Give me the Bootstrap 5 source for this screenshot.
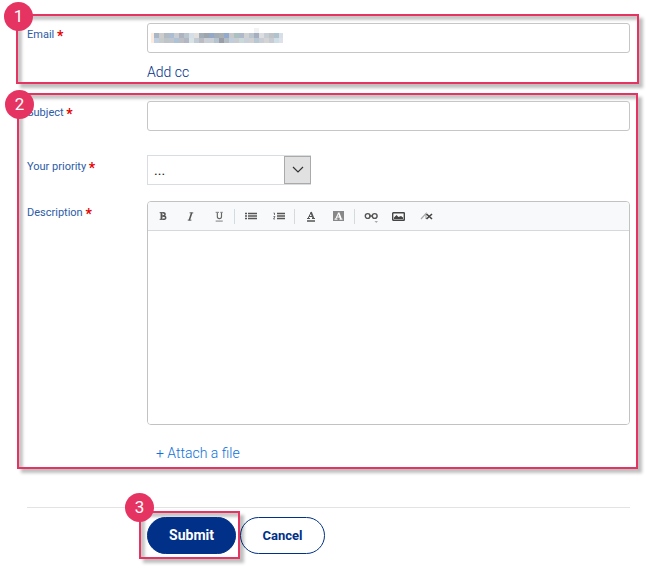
<!DOCTYPE html>
<html lang="en">
<head>
<meta charset="utf-8">
<meta name="viewport" content="width=device-width, initial-scale=1">
<title>Submit a request</title>
<link href="https://cdn.jsdelivr.net/npm/bootstrap@5.3.0/dist/css/bootstrap.min.css" rel="stylesheet">
<style>
body{font-family:Roboto,"Liberation Sans",sans-serif;font-size:14px;line-height:20px;color:#003087;background:#fff}
.page-form{padding:14px 23px 16px 16px}
.callout{position:relative;border:2px solid #e63462;box-shadow:4px 4px 3px rgba(0,0,0,.25),inset 4px 4px 3px rgba(0,0,0,.22)}
.callout-user{padding:7px 7px 0 9px}
.callout-details{margin:9px 1px 0 1px;padding:6px 6px 4px 8px}
.step{position:absolute;width:29px;height:29px;border-radius:50%;background:#e63462;color:#fff;font-size:17px;line-height:29px;text-align:center;left:-14px;top:-14px}
.callout-details .step{top:-5px}
.callout-submit .step{left:-16px;top:-20px}
.label-col{width:120px;flex:none;padding-top:5px;font-size:11px;line-height:14px;color:#2c5ba8}
.req{color:#e60000;font-size:14px;line-height:14px;font-weight:700;vertical-align:-3px}
.field,.field:focus{height:30px;min-height:30px;border:1px solid #c6c6c6;border-radius:3px;box-shadow:none;font-size:14px;padding:4px 6px}
.thin{font-weight:300;text-decoration:none}
.cc-row{padding-top:9px}
.cc{color:#003087}
.attach{color:#1070d8}
.attach-row{padding:18px 9px 0}
.mosaic{position:absolute;left:2px;top:5px;pointer-events:none}
.priority{width:164px;position:relative}
.priority select{display:block;appearance:none;width:100%;height:30px;border:1px solid #d8dde2;border-radius:0;background:#fff;padding:0 6px;font-size:14px;color:#222}
.arrow{position:absolute;right:0;top:1px;width:27px;height:28px;border:1px solid #aaa;background:#e1e1e1;pointer-events:none}
.editor{border:1px solid #c2c2c2;border-radius:4px;overflow:hidden}
.toolbar{height:29px;background:#f8f9fa;border-bottom:1px solid #d5d9dc;padding:0 1px}
.tools{display:flex;gap:1px}
.toolbar button{width:27px;height:28px;padding:0;border:0;background:none;display:flex;align-items:center;justify-content:center;color:#555}
.sep{width:1px;height:15px;background:#d5dade;margin:0 2px}
.editor textarea{display:block;width:100%;height:193px;border:0;resize:none;outline:0;padding:8px}
.rule{border-top:1px solid #e3e3e3;margin:38px 9px 0 11px}
.actions{padding-left:123px;margin-top:3px}
.callout-submit{padding:4px 2px 3px 6px}
.pill,.pill:hover{height:37px;border-radius:19px;border:1px solid #003087;font-size:13px;font-weight:700;padding:0;line-height:33px}
.pill-main,.pill-main:hover{width:89px;background:#003087;color:#fff;font-size:14px}
.pill-plain,.pill-plain:hover{width:85px;background:#fff;color:#003087;margin-top:6px}
</style>
<script src="https://cdn.jsdelivr.net/npm/bootstrap@5.3.0/dist/js/bootstrap.bundle.min.js" defer></script>
</head>
<body>
<form class="page-form">
  <section class="callout callout-user">
    <span class="step">1</span>
    <div class="d-flex">
      <label class="label-col" for="email">Email <span class="req">*</span></label>
      <div class="flex-grow-1">
        <div class="position-relative">
          <input class="form-control field" id="email" type="email">
          <svg class="mosaic" id="mosaic" width="134" height="16" shape-rendering="crispEdges" aria-hidden="true"></svg>
        </div>
        <div class="cc-row"><a class="thin cc" href="#">Add cc</a></div>
      </div>
    </div>
  </section>

  <section class="callout callout-details">
    <span class="step">2</span>
    <div class="d-flex">
      <label class="label-col" for="subject">Subject <span class="req">*</span></label>
      <div class="flex-grow-1"><input class="form-control field" id="subject" type="text"></div>
    </div>
    <div class="d-flex mt-4">
      <label class="label-col" for="priority">Your priority <span class="req">*</span></label>
      <div class="priority">
        <select id="priority"><option>...</option></select>
        <span class="arrow d-flex align-items-center justify-content-center"><svg width="12" height="8" viewBox="0 0 12 8" fill="none" stroke="#333" stroke-width="1.2"><path d="M1 1l5 5 5-5"/></svg></span>
      </div>
    </div>
    <div class="d-flex mt-3">
      <label class="label-col" for="description">Description <span class="req">*</span></label>
      <div class="flex-grow-1">
        <div class="editor">
          <div class="toolbar d-flex align-items-center">
            <div class="tools">
              <button type="button" aria-label="Bold"><svg width="10" height="10" viewBox="0 0 12 12" fill="none" stroke="currentColor"><path d="M2 2h5M2 10h5" stroke-width="1.200"/><path d="M4.200 2v8" stroke-width="2.200"/><path d="M6 2q2.500 0 2.500 2T5 6q4.300 0 4.300 2T6 10" stroke-width="1.700"/></svg></button>
              <button type="button" aria-label="Italic"><svg width="11" height="11" viewBox="0 0 12 12" fill="none" stroke="currentColor"><path d="M5 2h4M3 10h4"/><path d="M7.300 2L4.700 10" stroke-width="1.700"/></svg></button>
              <button type="button" aria-label="Underline"><svg width="10" height="11" viewBox="0 0 12 13" fill="none" stroke="#666"><path d="M2 1.500h4M7.500 1.500h3M2 12h8.500"/><path d="M4 2v4.500q0 2.500 2.500 2.500T9 6.500V2" stroke-width="1.400"/></svg></button>
            </div>
            <span class="sep"></span>
            <div class="tools">
              <button type="button" aria-label="Bulleted list"><svg width="12" height="8" viewBox="0 0 12 8" stroke="currentColor"><path d="M3 1.500h9M3 4h9M3 6.500h9" stroke-width="1.500"/><path d="M0 1.500h2M0 4h2M0 6.500h2" stroke-width="1.300"/></svg></button>
              <button type="button" aria-label="Numbered list"><svg width="12" height="8" viewBox="0 0 12 8" fill="none" stroke="currentColor"><path d="M4 1.500h8M4 4h8M4 6.500h8" stroke-width="1.500"/><path d="M.5 1h1v2M.5 4.500h1.500L.5 7H2" stroke-width=".8"/></svg></button>
            </div>
            <span class="sep"></span>
            <div class="tools">
              <button type="button" aria-label="Text colour"><svg width="10" height="11" viewBox="0 0 10 11" fill="none" stroke="currentColor"><path d="M1 10h8" stroke-width="1.300"/><path d="M2 7.500L5 1.500M3 5.500h4M1 7.500h3M6 7.500h3"/><path d="M5 1l2.500 6.500" stroke-width="1.700"/></svg></button>
              <button type="button" aria-label="Background colour"><svg width="11" height="10" viewBox="0 0 11 10" fill="none"><path fill="#888" d="M0 0h11v10H0z"/><g stroke="#fff"><path d="M2.700 8L5.500 2M3.500 6h4M1.500 8.200h3M6.500 8.200h3"/><path d="M5.500 1.500l2.500 6.500" stroke-width="1.700"/></g></svg></button>
            </div>
            <span class="sep"></span>
            <div class="tools">
              <button type="button" aria-label="Link"><svg width="14" height="14" viewBox="0 0 14 14" fill="none" stroke="currentColor" stroke-width="1.400"><circle cx="3.700" cy="7" r="2.400"/><circle cx="10.700" cy="7" r="2.400"/><path d="M5 7h4"/><path d="M10.500 12h3.500l-1.700 2z" fill="#aaa" stroke="none"/></svg></button>
              <button type="button" aria-label="Image"><svg width="13" height="9" viewBox="0 0 13 9"><rect x=".7" y=".7" width="11.600" height="7.600" rx=".6" fill="none" stroke="#444" stroke-width="1.400"/><path d="M2 7V5.500L4.500 3l2 2L9 4l2 1.500V7z" fill="#444"/></svg></button>
              <button type="button" aria-label="Remove formatting"><svg width="13" height="9" viewBox="0 0 13 9" fill="none"><path d="M1 7L6 1.500v5.500" stroke="#aaa" stroke-width="1.200"/><path d="M6.500 2l5.500 5M6.500 7L12 2" stroke="#444" stroke-width="1.600"/></svg></button>
            </div>
          </div>
          <textarea id="description"></textarea>
        </div>
        <div class="attach-row"><a class="thin attach" href="#">+ Attach a file</a></div>
      </div>
    </div>
  </section>

  <div class="rule"></div>
  <div class="actions d-flex align-items-start">
    <div class="callout callout-submit"><span class="step">3</span><button class="btn pill pill-main" type="submit">Submit</button></div>
    <button class="btn pill pill-plain" type="button">Cancel</button>
  </div>
</form>
<script>
// Obscured address: two rows of flat cells, drawn over the email box.
const rows = [
  'a9b6c6 ccc b2bac2 abbdd3 c9cdd1 adb4bf bac5cd d5dde6 e2dfdf a3adb5 9fa5ad 94a9c8 a3adb7 a9b0b4 92aacb c6c8cc abc1c0 aebac9 d0d2d1 bac5cf a6afbf dcdde0 c7cdd5 bfc3c8 b0c2cd d6dfe8',
  'c0d0e2 c8cbcc bdc5c8 c0c5cd adc2d4 bbbec4 b1b8c4 d7e3e5 c3cbd4 b9bcc2 c9cfd5 c9cfd5 b4c3ce 9a9ea9 b2bac4 c0cddc c8ccd0 c9d8d8 cacfdc d0d0d0 b8c8d3 c9cdd5 d4d4d4 c7ccd2 cfdde5 dde2ea'
].map(r => r.split(' '));
const cell = (x, y, w, h, c) => `<rect x="${x}" y="${y}" width="${w}" height="${h}" fill="#${c}"/>`;
let out = cell(2, 5, 3, 10, 'fdebe0') + cell(105, 0, 5, 5, 'f3f3f4');
rows.forEach((r, j) => r.forEach((c, i) => out += cell(5 + i * 5, 5 + j * 5, 5, 5, c)));
document.getElementById('mosaic').innerHTML = out;
</script>
</body>
</html>
